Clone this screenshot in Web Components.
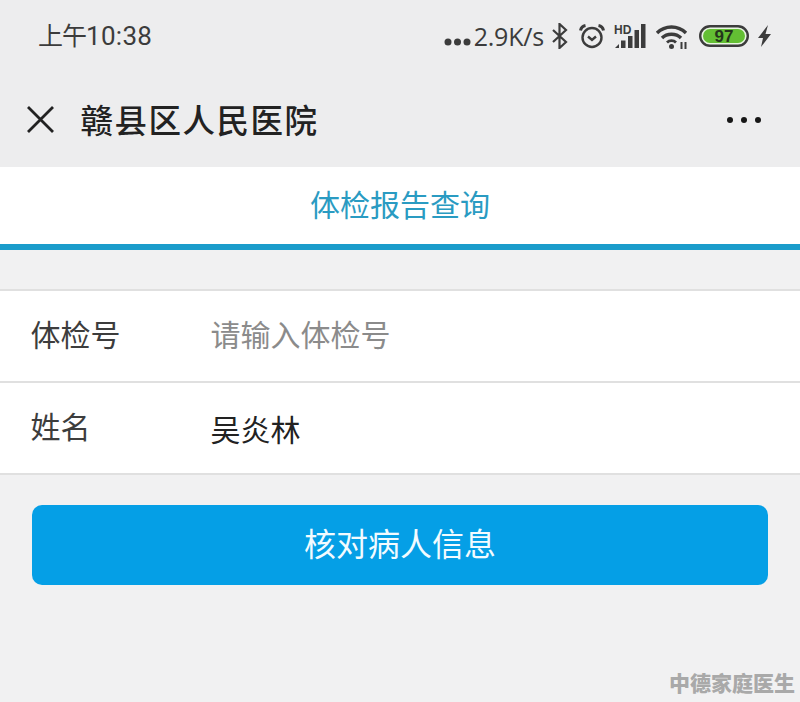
<!DOCTYPE html>
<html lang="zh">
<head>
<meta charset="utf-8">
<title>体检报告查询</title>
<style>
  html, body { margin: 0; padding: 0; }
  body {
    width: 800px;
    height: 702px;
    overflow: hidden;
    background: #f1f1f2;
    font-family: "Noto Sans CJK SC", "Liberation Sans", sans-serif;
  }
</style>
</head>
<body>
<app-header title-text="赣县区人民医院">
  <status-bar time="上午10:38" speed="2.9K/s" battery="97"></status-bar>
</app-header>
<tab-title>体检报告查询</tab-title>
<form-list>
  <form-row label="体检号" placeholder="请输入体检号"></form-row>
  <form-row label="姓名" value="吴炎林"></form-row>
</form-list>
<action-button>核对病人信息</action-button>
<water-mark>中德家庭医生</water-mark>

<script>
class StatusBar extends HTMLElement {
  constructor() {
    super();
    this.attachShadow({ mode: 'open' });
    this.shadowRoot.innerHTML = `
      <style>
        :host {
          display: flex;
          align-items: center;
          height: 72px;
          padding: 0 28px 0 38px;
          color: #3c3c3c;
        }
        .time { font: 400 26px/1 "Roboto", "Noto Sans CJK SC", sans-serif; letter-spacing: .3px; margin-bottom: 2px; }
        .time span { font-family: "Noto Sans CJK SC", sans-serif; font-size: 25px; letter-spacing: -1px; }
        .right { margin-left: auto; display: flex; align-items: center; }
        .speed { font: 400 25px/1 "Open Sans", sans-serif; letter-spacing: -.2px; margin: 0 8px 0 3px; }
        svg { display: block; flex: none; }
      </style>
      <div class="time"><span>上午</span>10:38</div>
      <div class="right">
        <svg width="27" height="8" viewBox="0 0 27 8" style="margin-top:11px"><g fill="#3c3c3c"><circle cx="4" cy="4" r="3.5"/><circle cx="13.5" cy="4" r="3.5"/><circle cx="23" cy="4" r="3.5"/></g></svg>
        <span class="speed">${this.getAttribute('speed')}</span>
        <svg width="16" height="26" viewBox="0 0 16 26" fill="none" stroke="#3c3c3c" stroke-width="2.200"><path d="M1 7l13 12-6.500 6V1L14 7 1 19"/></svg>
        <svg width="26" height="26" viewBox="0 0 26 26" fill="none" stroke="#3c3c3c" stroke-width="2.400" style="margin-left:11px"><circle cx="13" cy="14.500" r="9.500"/><path d="M9 13.500l4 3.500 4-3.500"/><path d="M1.500 7.500C2 5 4 3 6.500 2.500M24.500 7.500C24 5 22 3 19.500 2.500" stroke-width="3"/></svg>
        <svg width="32" height="26" viewBox="0 0 32 26" style="margin-left:9px"><g fill="#3c3c3c"><path d="M1 25l4-4v4z"/><rect x="7" y="17.500" width="4.500" height="7.500"/><rect x="14" y="13" width="4.500" height="12"/><rect x="20.500" y="7" width="4.500" height="18"/><rect x="27" y="1" width="4.500" height="24"/></g><text x="0" y="11" font-family="Liberation Sans, sans-serif" font-size="12" font-weight="700" fill="#3c3c3c">HD</text></svg>
        <svg width="34" height="26" viewBox="0 0 34 26" fill="none" stroke="#3c3c3c" stroke-width="3.400" style="margin-left:9px"><path d="M2 10C10 2 23 2 31 10"/><path d="M7 15c5-5 14-5 19 0"/><path d="M12 19.500c2.500-2.500 6.500-2.500 9 0" stroke-width="2.800"/><circle cx="16.500" cy="23.500" r="2.500" fill="#3c3c3c" stroke="none"/><path d="M26.500 19v7M30.500 19v7" stroke-width="2"/></svg>
        <svg width="50" height="22" viewBox="0 0 50 22" style="margin-left:10px"><rect x="1.200" y="1.200" width="47.600" height="19.600" rx="9.800" fill="#e9f5e2" stroke="#3c3c3c" stroke-width="2.400"/><rect x="4" y="4" width="42" height="14" rx="7" fill="#63bf33"/><text x="25" y="17" text-anchor="middle" font-family="Liberation Sans, sans-serif" font-size="17" font-weight="700" fill="#24351c">${this.getAttribute('battery')}</text></svg>
        <svg width="15" height="22" viewBox="0 0 15 22" style="margin-left:8px"><path d="M11 0L1 13h5L4 22 14 9H8.500z" fill="#3c3c3c"/></svg>
      </div>
    `;
  }
}
customElements.define('status-bar', StatusBar);

class AppHeader extends HTMLElement {
  constructor() {
    super();
    this.attachShadow({ mode: 'open' });
    this.shadowRoot.innerHTML = `
      <style>
        :host { display: block; background: #ededee; height: 167px; }
        .nav {
          display: flex;
          align-items: center;
          height: 95px;
          padding: 0 39px 0 26px;
          box-sizing: border-box;
        }
        h1 {
          margin: 0 0 0 25.500px;
          font: 500 32.500px/1 "Noto Sans CJK SC", sans-serif;
          letter-spacing: 1.500px;
          color: #222;
        }
        .more { margin-left: auto; }
        svg { display: block; }
      </style>
      <slot></slot>
      <div class="nav">
        <svg width="29" height="29" viewBox="0 0 29 29" fill="none" stroke="#222" stroke-width="2.800"><path d="M2 2l25 25M27 2L2 27"/></svg>
        <h1>${this.getAttribute('title-text')}</h1>
        <svg class="more" width="34" height="6" viewBox="0 0 34 6"><g fill="#161616"><circle cx="3" cy="3" r="3"/><circle cx="17" cy="3" r="3"/><circle cx="31" cy="3" r="3"/></g></svg>
      </div>
    `;
  }
}
customElements.define('app-header', AppHeader);

class TabTitle extends HTMLElement {
  constructor() {
    super();
    this.attachShadow({ mode: 'open' });
    this.shadowRoot.innerHTML = `
      <style>
        :host {
          display: flex;
          align-items: center;
          justify-content: center;
          box-sizing: border-box;
          height: 83px;
          padding-bottom: 6px;
          background: #fff;
          border-bottom: 6px solid #1a9ccb;
          color: #2a9bc2;
          font: 400 30px/1 "Noto Sans CJK SC", sans-serif;
        }
      </style>
      <slot></slot>
    `;
  }
}
customElements.define('tab-title', TabTitle);

class FormList extends HTMLElement {
  constructor() {
    super();
    this.attachShadow({ mode: 'open' });
    this.shadowRoot.innerHTML = `
      <style>
        :host {
          display: block;
          margin-top: 39px;
          background: #fff;
          border-top: 2px solid #e0e0e0;
          border-bottom: 2px solid #e0e0e0;
        }
        ::slotted(form-row:not(:first-child)) { border-top: 2px solid #e0e0e0; }
      </style>
      <slot></slot>
    `;
  }
}
customElements.define('form-list', FormList);

class FormRow extends HTMLElement {
  constructor() {
    super();
    this.attachShadow({ mode: 'open' });
    const value = this.getAttribute('value');
    const hint = this.getAttribute('placeholder');
    this.shadowRoot.innerHTML = `
      <style>
        :host {
          display: flex;
          align-items: center;
          box-sizing: content-box;
          height: 84px;
          padding: 0 0 6px 30.500px;
          font: 400 30px/1 "Noto Sans CJK SC", sans-serif;
        }
        .label { width: 180px; color: #3d3d3d; }
        .value { color: #222; margin-top: 6px; }
        .hint { color: #8b8b8b; }
      </style>
      <div class="label">${this.getAttribute('label')}</div>
      ${value ? `<div class="value">${value}</div>` : `<div class="hint">${hint}</div>`}
    `;
  }
}
customElements.define('form-row', FormRow);

class ActionButton extends HTMLElement {
  constructor() {
    super();
    this.attachShadow({ mode: 'open' });
    this.shadowRoot.innerHTML = `
      <style>
        :host {
          display: flex;
          align-items: center;
          justify-content: center;
          box-sizing: border-box;
          height: 80px;
          padding-bottom: 6px;
          margin: 30px 32px 0;
          border-radius: 10px;
          background: #059fe6;
          color: #f2fbff;
          font: 400 32px/1 "Noto Sans CJK SC", sans-serif;
        }
      </style>
      <slot></slot>
    `;
  }
}
customElements.define('action-button', ActionButton);

class WaterMark extends HTMLElement {
  constructor() {
    super();
    this.attachShadow({ mode: 'open' });
    this.shadowRoot.innerHTML = `
      <style>
        :host {
          position: absolute;
          right: 5px;
          bottom: 9px;
          color: #a9a9a9;
          font: 900 21px/1 "Noto Sans CJK SC", sans-serif;
        }
      </style>
      <slot></slot>
    `;
  }
}
customElements.define('water-mark', WaterMark);
</script>
</body>
</html>
